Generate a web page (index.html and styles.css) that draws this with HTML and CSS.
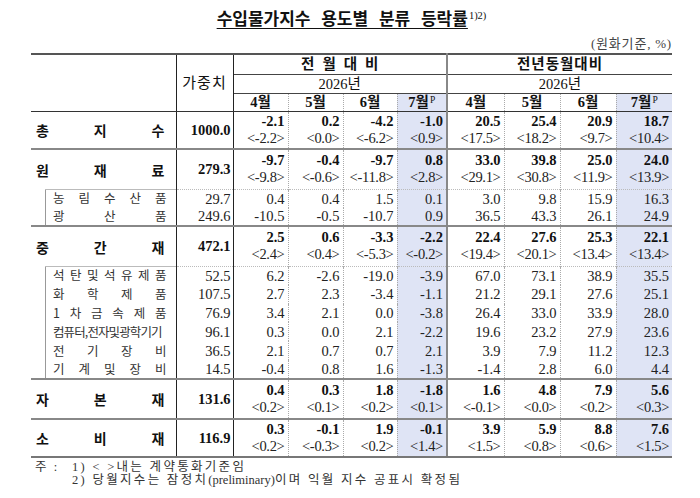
FILE: index.html
```html
<!DOCTYPE html>
<html lang="ko">
<head>
<meta charset="utf-8">
<title>수입물가지수 용도별 분류 등락률</title>
<link rel="stylesheet" href="styles.css">
</head>
<body>
<div class="page">
  <h1 class="title"><span class="title-text">수입물가지수 용도별 분류 등락률</span><sup>1)2)</sup></h1>
  <div class="unit">(원화기준, %)</div>
  <table class="stats">
    <colgroup>
      <col class="c-label"><col class="c-weight">
      <col class="c-m1"><col class="c-m2"><col class="c-m3"><col class="c-m4">
      <col class="c-y1"><col class="c-y2"><col class="c-y3"><col class="c-y4">
    </colgroup>
    <thead>
      <tr class="h1">
        <th rowspan="3" class="blank"></th>
        <th rowspan="3" class="weight-h">가중치</th>
        <th colspan="4" class="grp mom-h">전월대비</th>
        <th colspan="4" class="grp yoy-h">전년동월대비</th>
      </tr>
      <tr class="h2">
        <th colspan="4" class="year">2026년</th>
        <th colspan="4" class="year yoy-first">2026년</th>
      </tr>
      <tr class="h3">
        <th class="m">4월</th><th class="m">5월</th><th class="m">6월</th><th class="m cur end">7월<sup>P</sup></th>
        <th class="m">4월</th><th class="m">5월</th><th class="m">6월</th><th class="m cur last">7월<sup>P</sup></th>
      </tr>
    </thead>
    <tbody>
      <tr class="main first r38">
        <td class="label"><div class="spread"><span>총</span><span>지</span><span>수</span></div></td>
        <td class="w">1000.0</td>
        <td class="v"><b>-2.1</b><span>&lt;-2.2&gt;</span></td>
        <td class="v"><b>0.2</b><span>&lt;0.0&gt;</span></td>
        <td class="v"><b>-4.2</b><span>&lt;-6.2&gt;</span></td>
        <td class="v cur end"><b>-1.0</b><span>&lt;0.9&gt;</span></td>
        <td class="v"><b>20.5</b><span>&lt;17.5&gt;</span></td>
        <td class="v"><b>25.4</b><span>&lt;18.2&gt;</span></td>
        <td class="v"><b>20.9</b><span>&lt;9.7&gt;</span></td>
        <td class="v cur last"><b>18.7</b><span>&lt;10.4&gt;</span></td>
      </tr>
      <tr class="main r40">
        <td class="label"><div class="spread"><span>원</span><span>재</span><span>료</span></div></td>
        <td class="w">279.3</td>
        <td class="v"><b>-9.7</b><span>&lt;-9.8&gt;</span></td>
        <td class="v"><b>-0.4</b><span>&lt;-0.6&gt;</span></td>
        <td class="v"><b>-9.7</b><span>&lt;-11.8&gt;</span></td>
        <td class="v cur end"><b>0.8</b><span>&lt;2.8&gt;</span></td>
        <td class="v"><b>33.0</b><span>&lt;29.1&gt;</span></td>
        <td class="v"><b>39.8</b><span>&lt;30.8&gt;</span></td>
        <td class="v"><b>25.0</b><span>&lt;11.9&gt;</span></td>
        <td class="v cur last"><b>24.0</b><span>&lt;13.9&gt;</span></td>
      </tr>
      <tr class="sub sub-first s2">
        <td class="sublabel"><div class="spread"><span>농</span><span>림</span><span>수</span><span>산</span><span>품</span></div></td>
        <td class="w">29.7</td>
        <td class="n">0.4</td><td class="n">0.4</td><td class="n">1.5</td><td class="n cur end">0.1</td>
        <td class="n">3.0</td><td class="n">9.8</td><td class="n">15.9</td><td class="n cur last">16.3</td>
      </tr>
      <tr class="sub s2">
        <td class="sublabel"><div class="spread"><span>광</span><span>산</span><span>품</span></div></td>
        <td class="w">249.6</td>
        <td class="n">-10.5</td><td class="n">-0.5</td><td class="n">-10.7</td><td class="n cur end">0.9</td>
        <td class="n">36.5</td><td class="n">43.3</td><td class="n">26.1</td><td class="n cur last">24.9</td>
      </tr>
      <tr class="main r40">
        <td class="label"><div class="spread"><span>중</span><span>간</span><span>재</span></div></td>
        <td class="w">472.1</td>
        <td class="v"><b>2.5</b><span>&lt;2.4&gt;</span></td>
        <td class="v"><b>0.6</b><span>&lt;0.4&gt;</span></td>
        <td class="v"><b>-3.3</b><span>&lt;-5.3&gt;</span></td>
        <td class="v cur end"><b>-2.2</b><span>&lt;-0.2&gt;</span></td>
        <td class="v"><b>22.4</b><span>&lt;19.4&gt;</span></td>
        <td class="v"><b>27.6</b><span>&lt;20.1&gt;</span></td>
        <td class="v"><b>25.3</b><span>&lt;13.4&gt;</span></td>
        <td class="v cur last"><b>22.1</b><span>&lt;13.4&gt;</span></td>
      </tr>
      <tr class="sub sub-first s6">
        <td class="sublabel"><div class="spread"><span>석</span><span>탄</span><span>및</span><span>석</span><span>유</span><span>제</span><span>품</span></div></td>
        <td class="w">52.5</td>
        <td class="n">6.2</td><td class="n">-2.6</td><td class="n">-19.0</td><td class="n cur end">-3.9</td>
        <td class="n">67.0</td><td class="n">73.1</td><td class="n">38.9</td><td class="n cur last">35.5</td>
      </tr>
      <tr class="sub s6">
        <td class="sublabel"><div class="spread"><span>화</span><span>학</span><span>제</span><span>품</span></div></td>
        <td class="w">107.5</td>
        <td class="n">2.7</td><td class="n">2.3</td><td class="n">-3.4</td><td class="n cur end">-1.1</td>
        <td class="n">21.2</td><td class="n">29.1</td><td class="n">27.6</td><td class="n cur last">25.1</td>
      </tr>
      <tr class="sub s6">
        <td class="sublabel"><div class="spread"><span>1</span><span>차</span><span>금</span><span>속</span><span>제</span><span>품</span></div></td>
        <td class="w">76.9</td>
        <td class="n">3.4</td><td class="n">2.1</td><td class="n">0.0</td><td class="n cur end">-3.8</td>
        <td class="n">26.4</td><td class="n">33.0</td><td class="n">33.9</td><td class="n cur last">28.0</td>
      </tr>
      <tr class="sub s6">
        <td class="sublabel"><div class="spread tight"><span>컴퓨터,전자및광학기기</span></div></td>
        <td class="w">96.1</td>
        <td class="n">0.3</td><td class="n">0.0</td><td class="n">2.1</td><td class="n cur end">-2.2</td>
        <td class="n">19.6</td><td class="n">23.2</td><td class="n">27.9</td><td class="n cur last">23.6</td>
      </tr>
      <tr class="sub s6">
        <td class="sublabel"><div class="spread"><span>전</span><span>기</span><span>장</span><span>비</span></div></td>
        <td class="w">36.5</td>
        <td class="n">2.1</td><td class="n">0.7</td><td class="n">0.7</td><td class="n cur end">2.1</td>
        <td class="n">3.9</td><td class="n">7.9</td><td class="n">11.2</td><td class="n cur last">12.3</td>
      </tr>
      <tr class="sub s6">
        <td class="sublabel"><div class="spread"><span>기</span><span>계</span><span>및</span><span>장</span><span>비</span></div></td>
        <td class="w">14.5</td>
        <td class="n">-0.4</td><td class="n">0.8</td><td class="n">1.6</td><td class="n cur end">-1.3</td>
        <td class="n">-1.4</td><td class="n">2.8</td><td class="n">6.0</td><td class="n cur last">4.4</td>
      </tr>
      <tr class="main r40">
        <td class="label"><div class="spread"><span>자</span><span>본</span><span>재</span></div></td>
        <td class="w">131.6</td>
        <td class="v"><b>0.4</b><span>&lt;0.2&gt;</span></td>
        <td class="v"><b>0.3</b><span>&lt;0.1&gt;</span></td>
        <td class="v"><b>1.8</b><span>&lt;0.2&gt;</span></td>
        <td class="v cur end"><b>-1.8</b><span>&lt;0.1&gt;</span></td>
        <td class="v"><b>1.6</b><span>&lt;-0.1&gt;</span></td>
        <td class="v"><b>4.8</b><span>&lt;0.0&gt;</span></td>
        <td class="v"><b>7.9</b><span>&lt;0.2&gt;</span></td>
        <td class="v cur last"><b>5.6</b><span>&lt;0.3&gt;</span></td>
      </tr>
      <tr class="main final r38">
        <td class="label"><div class="spread"><span>소</span><span>비</span><span>재</span></div></td>
        <td class="w">116.9</td>
        <td class="v"><b>0.3</b><span>&lt;0.2&gt;</span></td>
        <td class="v"><b>-0.1</b><span>&lt;-0.3&gt;</span></td>
        <td class="v"><b>1.9</b><span>&lt;0.2&gt;</span></td>
        <td class="v cur end"><b>-0.1</b><span>&lt;1.4&gt;</span></td>
        <td class="v"><b>3.9</b><span>&lt;1.5&gt;</span></td>
        <td class="v"><b>5.9</b><span>&lt;0.8&gt;</span></td>
        <td class="v"><b>8.8</b><span>&lt;0.6&gt;</span></td>
        <td class="v cur last"><b>7.6</b><span>&lt;1.5&gt;</span></td>
      </tr>
    </tbody>
  </table>
  <div class="notes">
    <div class="note"><span class="note-head">주 :</span><span class="note-body">1) &lt; &gt;내는 계약통화기준임</span></div>
    <div class="note"><span class="note-head"></span><span class="note-body">2) 당월지수는 잠정치<span class="latin">(preliminary)</span>이며 익월 지수 공표시 확정됨</span></div>
  </div>
</div>
</body>
</html>
```

FILE: styles.css
```css
* { box-sizing: border-box; }
html, body { margin: 0; padding: 0; background: #fff; }
body {
  font-family: "Liberation Serif", "Noto Sans CJK KR", serif;
  color: #111;
}
.page {
  width: 641px;
  margin-left: 31px;
  padding-top: 8px;
}
.title {
  margin: 0;
  height: 20px;
  text-align: center;
  font: 700 17px/20px "Noto Sans CJK KR", sans-serif;
  word-spacing: 6px;
  color: #111;
}
.title-text {
  text-decoration: underline;
  text-decoration-thickness: 1px;
  text-underline-offset: 3px;
}
.title sup {
  font: 400 10.5px "Liberation Serif", serif;
  word-spacing: 0;
  vertical-align: 6px;
  margin-left: 1px;
}
.unit {
  margin-top: 8px;
  height: 16px;
  line-height: 16px;
  text-align: right;
  font-family: "Liberation Serif", "Noto Sans CJK KR", serif;
  font-size: 13px;
  letter-spacing: 0.8px;
  color: #444;
}
.stats {
  margin-top: 1px;
  width: 641px;
  border-collapse: collapse;
  table-layout: fixed;
}
.c-label { width: 145px; }
.c-weight { width: 57px; }
.c-m1 { width: 55px; }
.c-m2 { width: 55px; }
.c-m3 { width: 54px; }
.c-m4 { width: 50px; }
.c-y1 { width: 57px; }
.c-y2 { width: 56px; }
.c-y3 { width: 56px; }
.c-y4 { width: 56px; }

.stats th, .stats td { padding: 0; }

/* header */
.stats th {
  font-family: "Liberation Serif", "Noto Sans CJK KR", serif;
  font-size: 14.5px;
  font-weight: 700;
  text-align: center;
  vertical-align: middle;
  line-height: 16px;
}
.h1 { height: 20px; }
.h2 { height: 19px; }
.h3 { height: 18px; }
.h1 th { border-top: 2px solid #555; }
.blank { border-right: 1px solid #222; border-bottom: 1px solid #333; }
.weight-h {
  font-weight: 400 !important;
  font-size: 15px !important;
  letter-spacing: 1px;
  border-right: 1px solid #222;
  border-bottom: 1px solid #333;
}
.grp { border-bottom: 1px solid #444; }
.mom-h { letter-spacing: 8px; padding-left: 8px !important; border-right: 2px solid #888; }
.yoy-h { letter-spacing: 1px; }
.year { font-weight: 400 !important; border-bottom: 1px solid #444; }
.year:first-child { border-right: 2px solid #888; }
.h3 th { border-bottom: 1px solid #333; border-right: 1px dotted #aaa; }
.h3 th.end { border-right: 2px solid #888; }
.h3 th.last { border-right: none; }
.h3 th sup, .m sup {
  font: 400 9.5px "Liberation Serif", serif;
  vertical-align: 4px;
  margin-left: 1px;
}

/* body */
.r38 { height: 38px; }
.r40 { height: 40px; }
.s2 { height: 18.5px; }
.s6 { height: 18.8px; }

.main td { border-top: 2px solid #888; }
.main.first td { border-top: 1px solid #333; }
.final td { border-bottom: 2px solid #777; }
.sub-first td { border-top: 1px dotted #bbb; }
.sub-first td.sublabel { border-top: none; background:
  linear-gradient(#bbb, #bbb) 14px 0 / calc(100% - 14px) 1px no-repeat,
  linear-gradient(#999, #999) 14px 0 / 1px 100% no-repeat; }

.label, .sublabel { border-right: 1px solid #222; }
.label {
  padding: 0 11px 0 5px !important;
  font-family: "Noto Sans CJK KR", sans-serif;
  font-weight: 700;
  font-size: 14px;
  color: #111;
  vertical-align: middle;
}
.sublabel {
  padding: 0 9px 0 22px !important;
  font-family: "Noto Sans CJK KR", sans-serif;
  font-weight: 400;
  font-size: 12.5px;
  line-height: 16px;
  color: #333;
  vertical-align: middle;
  background: linear-gradient(#999, #999) 14px 0 / 1px 100% no-repeat;
}
.spread {
  display: flex;
  justify-content: space-between;
  align-items: center;
}
.spread.tight span {
  letter-spacing: -0.9px;
  white-space: nowrap;
}

.w {
  border-right: 1px solid #222;
  text-align: right;
  padding-right: 2px !important;
  font-size: 14.5px;
  line-height: 16px;
}
.main .w { font-weight: 700; }
.sub .w { color: #222; }

.v, .n {
  text-align: right;
  padding-right: 3px !important;
  border-right: 1px dotted #aaa;
  font-size: 14.5px;
  vertical-align: middle;
}
.v { line-height: 17px; }
.n { line-height: 16px; color: #222; }
.v b { display: block; font-weight: 700; color: #111; }
.v span { display: block; font-weight: 400; color: #222; letter-spacing: -0.3px; }
.stats td.end { border-right: 2px solid #888; }
.stats td.last { border-right: none; }
.cur { background: #dfe4f5; }

/* notes */
.notes {
  margin-top: 3px;
  padding-left: 4px;
  font-family: "Liberation Serif", "Noto Sans CJK KR", serif;
  font-size: 12.5px;
  line-height: 13.5px;
  color: #333;
}
.note { display: flex; }
.note-head { width: 37px; flex: none; letter-spacing: 2px; }
.note-body { letter-spacing: 2.3px; white-space: nowrap; }
.note-body .latin { letter-spacing: 0; }
```
